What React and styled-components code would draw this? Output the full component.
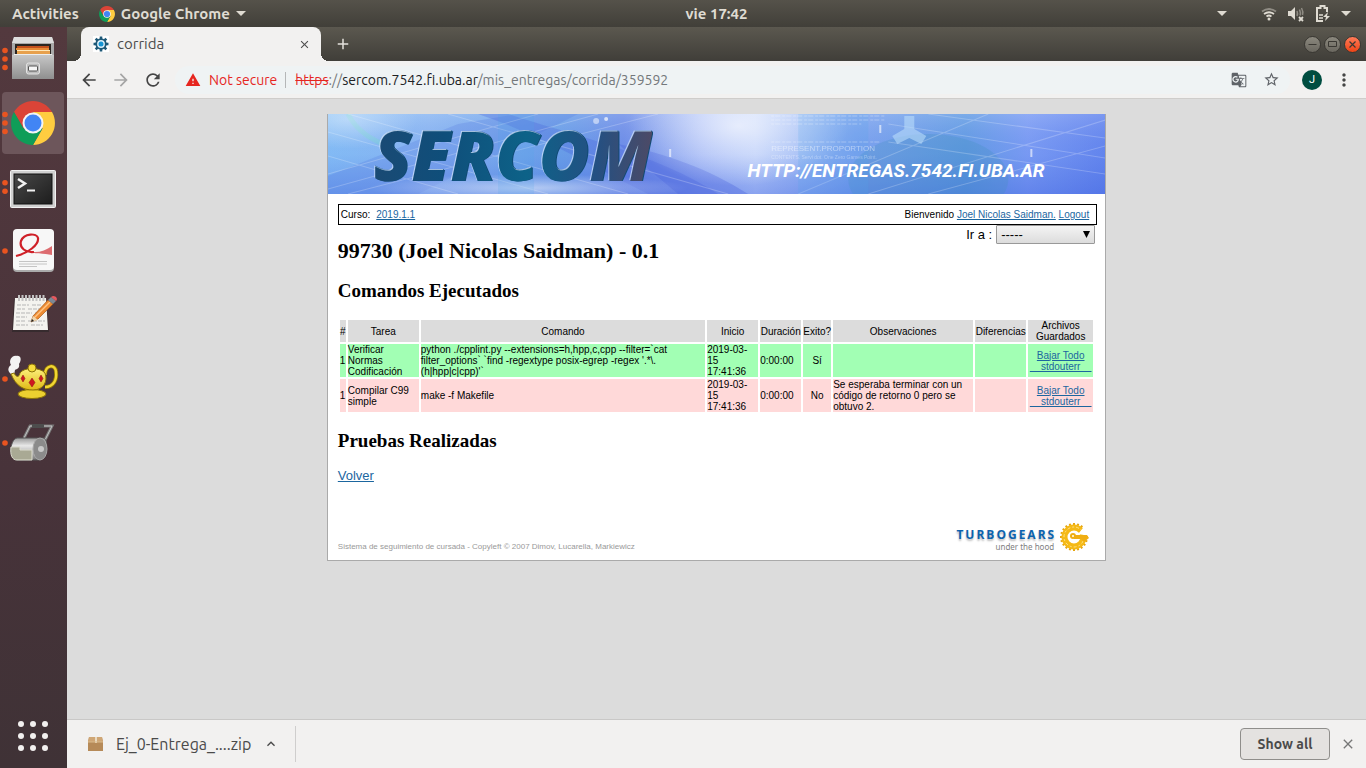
import React from "react";
import styled, { createGlobalStyle, css } from "styled-components";
import {
  MdArrowBack,
  MdArrowForward,
  MdRefresh,
  MdWarning,
  MdStarBorder,
  MdGTranslate,
  MdMoreVert,
  MdClose,
  MdAdd,
  MdKeyboardArrowUp,
} from "react-icons/md";

const ui = '"Ubuntu", "Noto Sans", sans-serif';
const sans = '"Liberation Sans", Arial, sans-serif';
const serif = '"Liberation Serif", "Times New Roman", serif';

const GlobalStyle = createGlobalStyle`
  * { box-sizing: border-box; }
  html, body, #root { height: 100%; }
  body { margin: 0; font-family: ${ui}; background: #dcdcdc; }
  button { font-family: inherit; border: 0; padding: 0; background: none; color: inherit; cursor: pointer; }
  svg { display: block; }
`;

const Desktop = styled.div`
  min-height: 100%;
  display: grid;
  grid-template: 27px 1fr / 67px minmax(0, 1fr);
`;

/* ---------- top panel ---------- */
const Panel = styled.header`
  grid-column: 1 / -1;
  display: grid;
  grid-template-columns: 67px 1fr auto 1fr;
  align-items: center;
  background: linear-gradient(#55524a, #413f39);
  color: #dfdbd2;
  font-size: 15px;
  font-weight: 700;
  line-height: 20px;
`;
const PanelLeft = styled.div`
  grid-column: 1 / 3;
  display: flex;
  align-items: center;
  gap: 20px;
  padding-left: 12px;
`;
const PanelButton = styled.button`
  display: flex;
  align-items: center;
  gap: 6px;
  font-size: 15px;
  line-height: 20px;
  font-weight: 700;
`;
const PanelRight = styled.div`
  display: flex;
  align-items: center;
  justify-content: flex-end;
  gap: 10px;
  padding-right: 15px;
`;
const Spaced = styled.span`
  margin-right: 24px;
`;

/* ---------- dock ---------- */
const Dock = styled.nav`
  display: flex;
  flex-direction: column;
  justify-content: space-between;
  padding: 1px 3px 11px 2px;
  background: linear-gradient(#53393e, #48333a 60%, #3f3236);
`;
const DockList = styled.div`
  display: flex;
  flex-direction: column;
  gap: 2px;
`;
const DockItem = styled.button`
  width: 62px;
  height: 62px;
  border-radius: 4px;
  background: ${(p) => (p.$active ? "#6d565b" : "transparent")};
`;
const AppsButton = styled.button`
  align-self: center;
`;

/* ---------- browser ---------- */
const Browser = styled.section`
  display: flex;
  flex-direction: column;
  min-width: 0;
`;
const TabStrip = styled.div`
  height: 34px;
  display: flex;
  align-items: center;
  padding: 0 5px 0 14px;
  background: linear-gradient(#5b584f, #403e39);
`;
const foot = css`
  content: "";
  position: absolute;
  bottom: 0;
  width: 8px;
  height: 8px;
`;
const Tab = styled.div`
  position: relative;
  width: 240px;
  height: 34px;
  display: flex;
  align-items: center;
  gap: 8px;
  padding: 0 10px 0 12px;
  border-radius: 8px 8px 0 0;
  background: #f2f1f0;
  color: #4d4d4d;
  font-size: 15px;
  line-height: 20px;
  &::before { ${foot} left: -8px; background: radial-gradient(circle at 0 0, transparent 8px, #f2f1f0 8px); }
  &::after { ${foot} right: -8px; background: radial-gradient(circle at 100% 0, transparent 8px, #f2f1f0 8px); }
`;
const TabTitle = styled.span`
  flex: 1;
`;
const NewTab = styled.button`
  margin-left: 13px;
  color: #e4e1dc;
`;
const WindowButtons = styled.div`
  display: flex;
  gap: 3px;
  margin-left: auto;
`;
const WindowButton = styled.button`
  width: 17px;
  height: 17px;
  border-radius: 50%;
  border: 1px solid #3a3833;
  background: ${(p) => (p.$close ? "linear-gradient(#ff7b58, #ee4416)" : "linear-gradient(#8b887e, #6a675f)")};
  color: #3a3833;
`;
const Toolbar = styled.div`
  height: 38px;
  display: flex;
  align-items: center;
  padding: 0 12px;
  gap: 12px;
  background: #f2f1f0;
  border-bottom: 1px solid #cfcdcb;
`;
const NavButton = styled.button`
  color: ${(p) => (p.$off ? "#a5a5a5" : "#454545")};
`;
const Omnibox = styled.div`
  flex: 1;
  height: 28px;
  display: flex;
  align-items: center;
  padding: 0 10px;
  border-radius: 14px;
  background: #eff3f4;
  font-size: 14px;
  line-height: 20px;
  color: #5f6368;
`;
const Warning = styled.span`
  display: flex;
  align-items: center;
  gap: 8px;
  padding-right: 8px;
  margin-right: 9px;
  border-right: 1px solid #b5b7b8;
  line-height: 16px;
  color: #e6261f;
`;
const Address = styled.div`
  flex: 1;
  color: #74787b;
  outline: 0;
  b { font-weight: 400; color: #202124; }
  s { color: #e6261f; }
`;
const OmniButtons = styled.div`
  display: flex;
  gap: 16px;
`;
const Avatar = styled.button`
  width: 20px;
  height: 20px;
  border-radius: 50%;
  background: #004d40;
  color: #fff;
  font: 11px/20px Roboto, sans-serif;
`;

const Viewport = styled.main`
  flex: 1;
  padding: 15px 0;
  background: #dcdcdc;
  color: #000;
  font-family: ${sans};
  font-size: 13px;
  line-height: 15px;
`;
const Sheet = styled.div`
  width: 60%;
  margin: 0 auto;
  background: #fff;
  border: 1px solid #aaa;
  border-top: 0;
`;
const Banner = styled.div`
  display: grid;
  grid-template: 80px / 54% 1fr;
`;
const BannerArt = styled.svg`
  grid-area: 1 / 1 / 2 / 3;
  width: 100%;
  height: 80px;
`;
const SiteName = styled.strong`
  grid-area: 1 / 1;
  justify-self: start;
  margin-left: 46px;
  font: italic 800 69px/80px "Open Sans", sans-serif;
  color: transparent;
  background: linear-gradient(90deg, #1a4a74, #0f4e7a 25%, #0d6288 55%, #245082 80%, #4c4a66);
  background-clip: text;
  filter: drop-shadow(-1px -1px #dcecffaa) drop-shadow(1px 0 #0f4a74);
`;
const SiteUrl = styled.span`
  grid-area: 1 / 2;
  align-self: end;
  padding-bottom: 12px;
  white-space: nowrap;
  color: #fff;
  font: italic 700 19px/22px Roboto, sans-serif;
`;
const Content = styled.div`
  padding: 10px 10px 0;
`;
const Link = styled.a`
  color: #1b669f;
`;
const UserBar = styled.div`
  display: flex;
  justify-content: space-between;
  margin-right: -2px;
  padding: 3px 7px 3px 2px;
  border: 1px solid #000;
  font-size: 10px;
  line-height: 13px;
`;
const Course = styled.span`
  display: flex;
  gap: 6px;
`;
const GoTo = styled.label`
  float: right;
  display: flex;
  align-items: center;
  gap: 4px;
`;
const SelectWrap = styled.span`
  position: relative;
  svg { position: absolute; right: 5px; top: 6px; pointer-events: none; }
`;
const Select = styled.select`
  display: block;
  appearance: none;
  width: 99px;
  height: 19px;
  padding: 0 4px;
  border: 1px solid #999;
  border-radius: 1px;
  background: linear-gradient(#f4f4f4, #dcdcdc);
  color: #000;
  font: 13px/17px ${sans};
`;
const Title = styled.h1`
  margin: 0;
  padding-top: 13px;
  font: bold 22px/26px ${serif};
`;
const Heading = styled.h2`
  margin: 16px 0;
  font: bold 19px/22px ${serif};
`;
const Table = styled.table`
  width: 100%;
  table-layout: fixed;
  border-spacing: 2px;
  font-size: 10px;
  line-height: 11px;
`;
const Col = styled.col`
  width: ${(p) => (p.$w ? `${p.$w}px` : "auto")};
`;
const Th = styled.th`
  padding: 0;
  background: #dcdcdc;
  font-weight: 400;
`;
const Row = styled.tr`
  background: ${(p) => (p.$ok ? "#a2ffb4" : "#ffd9d9")};
`;
const Td = styled.td`
  padding: 0;
  text-align: ${(p) => (p.$center ? "center" : "left")};
  a { white-space: pre; }
`;
const Footer = styled.footer`
  display: flex;
  justify-content: space-between;
  align-items: flex-end;
  margin-top: 38px;
  padding: 0 5px 8px 0;
`;
const Copyright = styled.span`
  font-size: 8px;
  line-height: 10px;
  color: #999;
`;
const Powered = styled.a`
  display: flex;
  align-items: flex-end;
  gap: 5px;
  text-decoration: none;
`;
const PoweredText = styled.span`
  display: flex;
  flex-direction: column;
  align-items: flex-end;
  color: #808080;
  font: 8px/10px "Noto Sans", sans-serif;
`;
const Brand = styled.strong`
  color: #0b62ad;
  font: bold 12px/14px "Open Sans", sans-serif;
  letter-spacing: 2px;
  margin-right: -2px;
  text-shadow: 0 2px 2px #bbb;
`;

const DownloadBar = styled.footer`
  height: 49px;
  display: flex;
  align-items: center;
  padding: 0 10px 0 20px;
  background: #f2f1f0;
  border-top: 1px solid #c9c8c7;
  color: #4a4a4a;
`;
const Download = styled.button`
  height: 36px;
  display: flex;
  align-items: center;
  gap: 12px;
  padding-right: 16px;
  border-right: 1px solid #cfcecd;
  font-size: 16px;
`;
const ShowAll = styled.button`
  width: 90px;
  height: 32px;
  margin: 0 10px 0 auto;
  border: 1px solid #8f8e8b;
  border-radius: 4px;
  background: #e4e2e0;
  font-size: 14px;
  font-weight: 600;
`;
const Dismiss = styled.button`
  color: #777;
`;

/* ---------- drawings ---------- */
const Caret = () => (
  <svg width="10" height="5" viewBox="0 0 10 5"><path d="M0 0h10L5 5z" fill="currentColor" /></svg>
);

const ChromeShapes = () => (
  <>
    <path d="M-19-11A22 22 0 0 1 19-11H0L-9.5 5.5z" fill="#db4437" />
    <path d="M19-11A22 22 0 0 1 0 22L9.5 5.5 0-11z" fill="#ffcd40" />
    <path d="M0 22A22 22 0 0 1-19-11L-9.5 5.5 9.5 5.5z" fill="#0f9d58" />
    <circle r="10.500" fill="#f4f4f4" />
    <circle r="8.500" fill="#4285f4" />
  </>
);

const Dots = ({ n }) =>
  Array.from({ length: n }, (_, i) => (
    <circle key={i} cx="3" cy={31 + (i - (n - 1) / 2) * 8.5} r="2.800" fill="#e95420" />
  ));

const Glyph = ({ dots = 0, children }) => (
  <svg width="62" height="62" viewBox="0 0 62 62">
    <Dots n={dots} />
    {children}
  </svg>
);

const Files = () => (
  <g>
    <path d="M12 9h38l2 6v35H10V15z" fill="#aaa" />
    <path d="M12 9h38l2 6H10z" fill="#dedede" />
    <path d="M13 16h36v11H13z" fill="#2c2622" />
    <path d="M15 18h32v3H15z" fill="#c4511d" />
    <path d="M14 20h33v2H14z" fill="#e78a35" />
    <path d="M15 22h33v5H15z" fill="#e7a04c" />
    <path d="M15 22h33v1H15z" fill="#ffe7b8" />
    <path d="M10 27l3-1h36l3 1v24H10z" fill="url(#steel)" />
    <path d="M12 26.500h38" stroke="#ededed" />
    <rect x="24.500" y="35" width="13" height="11" rx="2" fill="#bdbdbd" stroke="#e3e3e3" />
    <rect x="26.500" y="38" width="9" height="5" rx="1" fill="#f5f5f5" stroke="#555" />
  </g>
);
const Terminal = () => (
  <g>
    <rect x="8.500" y="14.500" width="45" height="37" rx="1" fill="#d0d0d0" stroke="#f2f2f2" />
    <rect x="12" y="18" width="38" height="30" fill="url(#screen)" stroke="#111" />
    <path d="M16 23l7 4.500-7 4.500" fill="none" stroke="#f1f1f1" strokeWidth="2.500" />
    <path d="M25 34.500h8" stroke="#f1f1f1" strokeWidth="2" />
  </g>
);
const Pdf = () => (
  <g>
    <rect x="11" y="10" width="41" height="42" rx="4" fill="#aaa" />
    <rect x="11" y="9" width="41" height="41" rx="4" fill="#f7f7f7" />
    <path d="M24 30c8 4 18 2 26-4v9c-8-2-18 0-26-5z" fill="#dd6c70" />
    <path d="M14 36c12-3 23-11 22-18-1-5-14-5-17 3-2 7 5 12 13 11" fill="none" stroke="#cf2028" strokeWidth="2.200" />
    <path d="M17 41.500h28M17 44h28M17 46.500h18" stroke="#c4c4c4" />
  </g>
);
const Notes = () => (
  <g>
    <path d="M12 15h32l3 33H10z" fill="#222" opacity=".5" />
    <path d="M13 14h31l2 32H11z" fill="#f4f3ef" />
    <path d="M17 11v6M20.500 11v6M24 11v6M27.500 11v6M31 11v6M34.500 11v6M38 11v6M41.500 11v6" stroke="#c4c4c4" strokeWidth="2" />
    <path d="M15 21h12m3 0h10M15 25h8m3 0h14M14 29h16m3 0h7M14 33h11M14 37h9m3 0h17M14 41h12m3 0h12" stroke="#b5b5b5" strokeDasharray="4 1" />
    <path d="M29 38l2-6L46 16l5 4-15 15z" fill="#ed8b32" stroke="#a85a1b" strokeWidth=".700" />
    <path d="M32 34l16-16" stroke="#ffc483" strokeWidth="1.500" />
    <path d="M29 38l2-6 5 4z" fill="#edd5ae" /><path d="M29 38l1-3 2 2z" fill="#222" />
    <path d="M46 16l3-3 5 4-3 3z" fill="#7d8894" /><path d="M49 13c3-3 8 1 5 4z" fill="#e6595e" />
  </g>
);
const Teapot = () => (
  <g>
    <path d="M9 26c-4-3-3-7 0-9-3-5 2-10 5-9 5-1 6 4 3 8 1 4-2 5-4 6l-1 5h-2z" fill="#f3f3f3" />
    <path d="M24 40h12l3 5H20z" fill="#c79f0c" />
    <ellipse cx="30" cy="46" rx="14" ry="4.500" fill="#ecd030" stroke="#8c7307" />
    <path d="M43 27c0-11 11-11 11-3 1 7-2 15-11 15" fill="none" stroke="#8c7307" strokeWidth="4" />
    <path d="M43 27c0-11 11-11 11-3 1 7-2 15-11 15" fill="none" stroke="#f2d633" strokeWidth="2.500" />
    <path d="M9 26l3-1c2 4 5 5 6 0 4-6 20-6 25 0 3 8-1 17-12 17-10 0-17-4-22-16z" fill="url(#gold)" stroke="#8c7307" />
    <circle cx="30" cy="20" r="4" fill="#f6dc3d" stroke="#8c7307" />
    <path d="M21 27l2 3.500-2 3.500-2-3.500zM30 30l3 4.500-3 4.500-3-4.500zM39 27l2 3.500-2 3.500-2-3.500z" fill="#cf1820" stroke="#8b1013" strokeWidth=".500" />
  </g>
);
const Roller = () => (
  <g>
    <path d="M22 26l6-12h22L39 36" fill="none" stroke="#777" strokeWidth="3" />
    <path d="M22 26l6-12h22L39 36" fill="none" stroke="#c4c4c4" />
    <path d="M30 14h12" stroke="#4d4d4d" strokeWidth="4" />
    <path d="M15 26h26c6 0 5 22-5 22H15c-8 0-8-20 0-22z" fill="url(#drum)" stroke="#555" />
    <path d="M9 35h9v3h12v10H15c-5 0-7-5-6-13z" fill="#a9a994" stroke="#dcdccf" />
    <ellipse cx="38" cy="37" rx="7" ry="11" fill="#8b8b8b" stroke="#a8a8a8" />
    <circle cx="39" cy="37" r="3" fill="#c9c9c9" />
  </g>
);
const dock = [
  { name: "Archivos", dots: 3, icon: <Files /> },
  { name: "Google Chrome", dots: 3, active: true, icon: <g transform="translate(31 31)"><ChromeShapes /></g> },
  { name: "Terminal", dots: 2, icon: <Terminal /> },
  { name: "Visor de documentos", dots: 1, icon: <Pdf /> },
  { name: "Editor de texto", dots: 0, icon: <Notes /> },
  { name: "Tetera", dots: 1, icon: <Teapot /> },
  { name: "Rodillo", dots: 1, icon: <Roller /> },
];

const Defs = () => (
  <svg width="0" height="0" style={{ position: "absolute" }} aria-hidden="true">
    <defs>
      <linearGradient id="steel" x2="0" y2="1"><stop stopColor="#c9c9c9" /><stop offset="1" stopColor="#8f8f8f" /></linearGradient>
      <linearGradient id="screen" x2="1" y2="1"><stop stopColor="#484848" /><stop offset="1" stopColor="#1d1d1d" /></linearGradient>
      <linearGradient id="gold" x2="0" y2="1"><stop stopColor="#fdf07c" /><stop offset="1" stopColor="#dfb916" /></linearGradient>
      <linearGradient id="drum" x2="0" y2="1"><stop stopColor="#999" /><stop offset=".35" stopColor="#e8e8e8" /><stop offset="1" stopColor="#777" /></linearGradient>
    </defs>
  </svg>
);

const WifiIcon = () => (
  <svg width="16" height="16" viewBox="0 0 16 16" fill="none" stroke="#dfdbd2" strokeWidth="1.800">
    <path d="M1 5.500q7-5 14 0" opacity=".45" /><path d="M3 8q5-3.500 10 0M5.500 10.500q2.500-2 5 0" />
    <circle cx="8" cy="13" r="1.500" fill="#dfdbd2" stroke="none" />
  </svg>
);
const VolumeIcon = () => (
  <svg width="18" height="16" viewBox="0 0 18 16" fill="none" stroke="#dfdbd2" strokeWidth="1.500">
    <path d="M1 5h3l4-4v13l-4-4H1z" fill="#dfdbd2" stroke="none" />
    <path d="M10 5q1 2.500 0 5M12.500 3.500q1.500 4 .5 6M14.500 2q2 3.500 1 7" opacity=".45" />
    <path d="M12 11l4 4m0-4l-4 4" strokeWidth="1.800" />
  </svg>
);
const BatteryIcon = () => (
  <svg width="16" height="18" viewBox="0 0 16 18" fill="none" stroke="#dfdbd2" strokeWidth="2">
    <path d="M12 7V3H9.500V1h-4v2H2v13h6" /><path d="M4 10h4M4 13h4" strokeWidth="1.500" />
    <path d="M13 7l-5 5h3l-1 4 5-5h-3z" fill="#dfdbd2" stroke="none" />
  </svg>
);

const gearTeeth = (cx, cy, r, n, w, h, fill) =>
  Array.from({ length: n }, (_, i) => (
    <rect key={i} x={cx - w / 2} y={cy - r - h} width={w} height={h + 1} fill={fill} transform={`rotate(${(i * 360) / n} ${cx} ${cy})`} />
  ));
const Favicon = () => (
  <svg width="16" height="16" viewBox="0 0 16 16">
    <rect width="16" height="16" fill="#fff" />
    {gearTeeth(8, 8, 5.5, 8, 2.6, 2, "#1d5877")}
    <circle cx="8" cy="8" r="4.800" fill="#dff1fa" stroke="#1d5877" strokeWidth="1.800" />
    <circle cx="8" cy="8" r="2.500" fill="#1795d4" />
  </svg>
);
const TurboGear = () => (
  <svg width="31" height="31" viewBox="0 0 31 31">
    {gearTeeth(15, 16, 12, 20, 2, 2, "#e6a50f")}
    <circle cx="15" cy="16" r="9.500" fill="none" stroke="#f5b916" strokeWidth="6" />
    <circle cx="15" cy="16" r="10" fill="none" stroke="#fff0b5" strokeDasharray="2 2 3 2" opacity=".7" />
    <path d="M19 13l5-6 7-2v10z" fill="#fff" />
    <path d="M15 14h13l2 3-5 4-3-3h-7z" fill="#f0ae12" />
    <circle cx="14" cy="15" r="3" fill="#f0ae12" /><circle cx="14" cy="15" r="1" fill="#fff" />
  </svg>
);
const Package = () => (
  <svg width="17" height="16" viewBox="0 0 17 16">
    <path d="M2 1h13l1 5v9H1V6z" fill="#b68a58" /><path d="M2 1h13l1 5H1z" fill="#cfa675" />
    <path d="M8 1h2v6H8z" fill="#ead9bf" /><path d="M1 6h15" stroke="#d9ba8c" />
  </svg>
);

const SiteBanner = () => (
  <Banner>
    <BannerArt viewBox="0 0 777 80" preserveAspectRatio="xMidYMid slice">
      <defs>
        <linearGradient id="sky">
          <stop stopColor="#86bff6" /><stop offset=".13" stopColor="#8ab6f2" /><stop offset=".3" stopColor="#6a9fe8" />
          <stop offset=".38" stopColor="#6f8fe8" /><stop offset=".48" stopColor="#a0b6f6" /><stop offset=".55" stopColor="#b8ccfa" />
          <stop offset=".68" stopColor="#7ea4ef" /><stop offset=".82" stopColor="#639ce4" /><stop offset=".9" stopColor="#7b9cf4" />
          <stop offset="1" stopColor="#6486ee" />
        </linearGradient>
        <linearGradient id="shade" x2="0" y2="1">
          <stop stopColor="#fff" stopOpacity=".15" /><stop offset=".5" stopColor="#3c62dd" stopOpacity=".05" /><stop offset="1" stopColor="#3558dc" stopOpacity=".35" />
        </linearGradient>
        <radialGradient id="glow"><stop stopColor="#fff" stopOpacity=".9" /><stop offset="1" stopColor="#fff" stopOpacity="0" /></radialGradient>
      </defs>
      <rect width="777" height="80" fill="url(#sky)" />
      <rect width="777" height="80" fill="url(#shade)" />
      <path d="M0 80V62L130 10 190 0h60L90 80z" fill="#5577de" opacity=".25" />
      <path d="M180 0c60 20 150 40 210 80h-70C260 50 210 20 150 0z" fill="#4a63dc" opacity=".3" />
      <path d="M290 30c50 10 90 25 130 50h-70z" fill="#4a63dc" opacity=".35" />
      <path d="M20 0q10 20 35 30" stroke="#6fd6c8" strokeWidth="5" opacity=".35" fill="none" />
      <ellipse cx="200" cy="74" rx="160" ry="14" fill="url(#glow)" opacity=".6" />
      <ellipse cx="410" cy="12" rx="110" ry="60" fill="url(#glow)" opacity=".75" />
      <ellipse cx="20" cy="5" rx="70" ry="30" fill="url(#glow)" opacity=".4" />
      <ellipse cx="600" cy="65" rx="80" ry="45" fill="#3e91bd" opacity=".25" />
      <path d="M0 18l220 62M0 42l130 38M20 0l280 80M120 0l280 80M0 60L210 0M0 75L270 0M20 80L330 0M540 80L777 6M600 80l177-48M470 80L660 0M600 0l177 24M560 10l217 34M560 28l217 32" stroke="#fff" opacity=".22" fill="none" />
      <path d="M170 0h36v80h-36zM470 0h70v80h-70z" fill="#4ba6ea" opacity=".18" />
      <path d="M53 2h113M53 6h113M53 10h90M53 28h110" transform="translate(390 0)" stroke="#fff" strokeDasharray="3 1 5 2" opacity=".3" />
      <path d="M576 2h10v13l12 7-5 8-12-6-12 6-5-8 12-7z" fill="#b9dcfa" opacity=".6" />
      <path d="M552 11v8M703 35v8M342 35v8" stroke="#fff" strokeWidth="2" opacity=".6" />
      <circle cx="268" cy="7" r="3" fill="#fff" opacity=".5" /><circle cx="278" cy="5" r="2" fill="#fff" opacity=".7" />
      <text x="443" y="37" fill="#fff" opacity=".45" fontFamily="Liberation Sans, sans-serif" fontSize="8">REPRESENT.PROPORTION</text>
      <text x="443" y="45" fill="#fff" opacity=".35" fontFamily="Liberation Sans, sans-serif" fontSize="5">CONTENTS. Servi dot. One Zero Games Point.</text>
    </BannerArt>
    <SiteName>SERCOM</SiteName>
    <SiteUrl>HTTP://ENTREGAS.7542.FI.UBA.AR</SiteUrl>
  </Banner>
);

const columns = [
  ["#", 6], ["Tarea", 71], ["Comando", 0], ["Inicio", 51], ["Duración", 41],
  ["Exito?", 28], ["Observaciones", 140], ["Diferencias", 51], ["Archivos Guardados", 65],
];
const runs = [
  {
    ok: true, n: 1, task: "Verificar Normas Codificación",
    cmd: "python ./cpplint.py --extensions=h,hpp,c,cpp --filter=`cat filter_options` `find -regextype posix-egrep -regex '.*\\.(h|hpp|c|cpp)'`",
    start: "2019-03-15 17:41:36", time: "0:00:00", result: "Sí", notes: "",
  },
  {
    ok: false, n: 1, task: "Compilar C99 simple", cmd: "make -f Makefile",
    start: "2019-03-15 17:41:36", time: "0:00:00", result: "No",
    notes: "Se esperaba terminar con un código de retorno 0 pero se obtuvo 2.",
  },
];

export default function App() {
  return (
    <>
      <GlobalStyle />
      <Defs />
      <Desktop>
        <Panel>
          <PanelLeft>
            <PanelButton>Activities</PanelButton>
            <PanelButton>
              <svg width="16" height="16" viewBox="-22 -22 44 44"><ChromeShapes /></svg>
              Google Chrome
              <Caret />
            </PanelButton>
          </PanelLeft>
          <span>vie 17:42</span>
          <PanelRight>
            <Spaced><Caret /></Spaced>
            <WifiIcon />
            <VolumeIcon />
            <BatteryIcon />
            <Caret />
          </PanelRight>
        </Panel>

        <Dock>
          <DockList>
            {dock.map((d) => (
              <DockItem key={d.name} aria-label={d.name} $active={d.active}>
                <Glyph dots={d.dots}>{d.icon}</Glyph>
              </DockItem>
            ))}
          </DockList>
          <AppsButton aria-label="Aplicaciones">
            <svg width="32" height="42" viewBox="0 0 32 42" fill="#f2f0ef">
              {[4, 16, 28].map((x) => [9, 21, 33].map((y) => <circle key={`${x}-${y}`} cx={x} cy={y} r="3" />))}
            </svg>
          </AppsButton>
        </Dock>

        <Browser>
          <TabStrip>
            <Tab>
              <Favicon />
              <TabTitle>corrida</TabTitle>
              <button aria-label="Cerrar"><MdClose size={13} /></button>
            </Tab>
            <NewTab aria-label="Nueva"><MdAdd size={18} /></NewTab>
            <WindowButtons>
              <WindowButton aria-label="Minimizar"><svg width="15" height="15"><path d="M3.500 7.500h8" stroke="currentColor" /></svg></WindowButton>
              <WindowButton aria-label="Maximizar"><svg width="15" height="15"><path d="M3.500 4.500h8v5h-8z" fill="none" stroke="currentColor" /></svg></WindowButton>
              <WindowButton aria-label="Cerrar ventana" $close><svg width="15" height="15"><path d="M4.500 4.500l6 6m0-6l-6 6" stroke="currentColor" strokeWidth="1.200" /></svg></WindowButton>
            </WindowButtons>
          </TabStrip>
          <Toolbar>
            <NavButton aria-label="Atrás"><MdArrowBack size={20} /></NavButton>
            <NavButton aria-label="Adelante" $off><MdArrowForward size={20} /></NavButton>
            <NavButton aria-label="Recargar"><MdRefresh size={20} /></NavButton>
            <Omnibox>
              <Warning><MdWarning size={16} />Not secure</Warning>
              <Address role="textbox" aria-label="Dirección"><s>https</s>://<b>sercom.7542.fi.uba.ar</b>/mis_entregas/corrida/359592</Address>
              <OmniButtons>
                <button aria-label="Traducir"><MdGTranslate size={16} /></button>
                <button aria-label="Favorito"><MdStarBorder size={17} /></button>
              </OmniButtons>
            </Omnibox>
            <Avatar>J</Avatar>
            <NavButton aria-label="Menú"><MdMoreVert size={20} /></NavButton>
          </Toolbar>

          <Viewport>
            <Sheet>
              <SiteBanner />
              <Content>
                <UserBar>
                  <Course>Curso: <Link href="#curso">2019.1.1</Link></Course>
                  <span>Bienvenido <Link href="#perfil">Joel Nicolas Saidman.</Link> <Link href="#logout">Logout</Link></span>
                </UserBar>
                <GoTo>
                  Ir a :
                  <SelectWrap>
                    <Select defaultValue="-----"><option>-----</option></Select>
                    <svg width="7" height="7"><path d="M0 0h7L3.500 7z" /></svg>
                  </SelectWrap>
                </GoTo>
                <Title>99730 (Joel Nicolas Saidman) - 0.1</Title>
                <Heading>Comandos Ejecutados</Heading>
                <Table>
                  <colgroup>{columns.map(([name, w]) => <Col key={name} $w={w} />)}</colgroup>
                  <thead><tr>{columns.map(([name]) => <Th key={name} scope="col">{name}</Th>)}</tr></thead>
                  <tbody>
                    {runs.map((r) => (
                      <Row key={r.task} $ok={r.ok}>
                        <Td>{r.n}</Td>
                        <Td>{r.task}</Td>
                        <Td>{r.cmd}</Td>
                        <Td>{r.start}</Td>
                        <Td>{r.time}</Td>
                        <Td $center>{r.result}</Td>
                        <Td>{r.notes}</Td>
                        <Td />
                        <Td $center>
                          <Link href="#todo">Bajar Todo</Link><br />
                          <Link href="#stdouterr">{"\u00a0\u00a0\u00a0\u00a0stdouterr\u00a0\u00a0\u00a0\u00a0"}</Link>
                        </Td>
                      </Row>
                    ))}
                  </tbody>
                </Table>
                <Heading>Pruebas Realizadas</Heading>
                <Link href="#volver">Volver</Link>
                <Footer>
                  <Copyright>Sistema de seguimiento de cursada - Copyleft © 2007 Dimov, Lucarella, Markiewicz</Copyright>
                  <Powered href="#turbogears">
                    <PoweredText><Brand>TURBOGEARS</Brand>under the hood</PoweredText>
                    <TurboGear />
                  </Powered>
                </Footer>
              </Content>
            </Sheet>
          </Viewport>

          <DownloadBar>
            <Download>
              <Package />
              Ej_0-Entrega_....zip
              <MdKeyboardArrowUp size={16} />
            </Download>
            <ShowAll>Show all</ShowAll>
            <Dismiss aria-label="Cerrar descargas"><MdClose size={16} /></Dismiss>
          </DownloadBar>
        </Browser>
      </Desktop>
    </>
  );
}
